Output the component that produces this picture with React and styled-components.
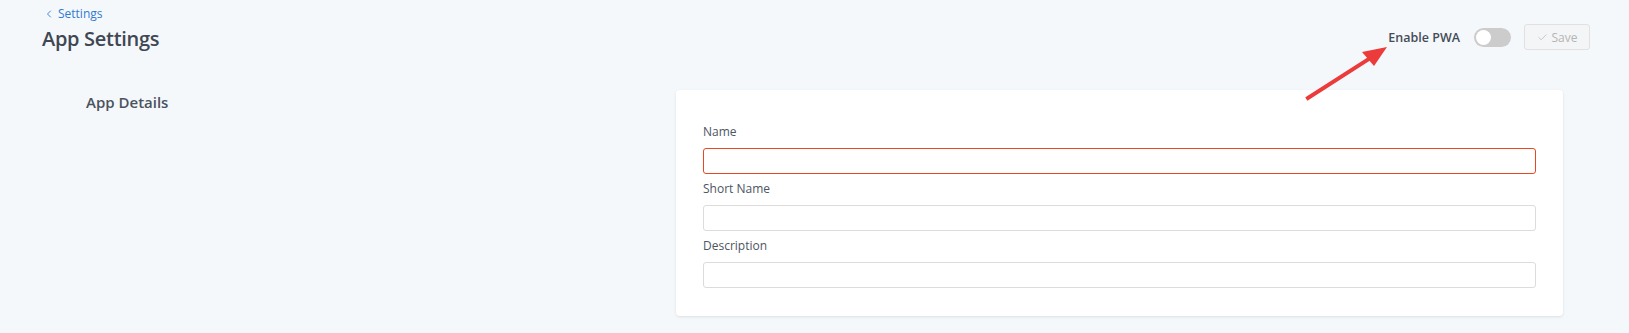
import React from "react";
import styled, { createGlobalStyle } from "styled-components";
import { ChevronLeft, Check } from "lucide-react";

const GlobalStyle = createGlobalStyle`
  html, body { margin: 0; padding: 0; }
  body {
    background: #f5f8fb;
    font-family: "Open Sans", "Noto Sans", sans-serif;
    color: #3f4a56;
  }
  * { box-sizing: border-box; }
`;

const Page = styled.div`
  position: relative;
  width: 1629px;
  min-height: 333px;
  background: #f5f8fb;
`;

const Header = styled.header`
  display: flex;
  justify-content: space-between;
  align-items: flex-start;
  padding: 6px 39px 0 42px;
`;

const TitleBlock = styled.div`
  display: flex;
  flex-direction: column;
`;

const BackLink = styled.a`
  display: inline-flex;
  align-items: center;
  gap: 3px;
  font-size: 12px;
  line-height: 16px;
  color: #2f7ad3;
  text-decoration: none;
  margin-left: 1px;
  cursor: pointer;
`;

const Title = styled.h1`
  margin: 3px 0 0;
  font-size: 20px;
  line-height: 28px;
  font-weight: 600;
  color: #3f4753;
  letter-spacing: -0.3px;
`;

const Actions = styled.div`
  display: flex;
  align-items: center;
  margin-top: 18px;
`;

const ToggleLabel = styled.span`
  font-size: 12.5px;
  font-weight: 600;
  color: #444c57;
  margin-right: 14px;
`;

const Toggle = styled.button`
  position: relative;
  width: 37px;
  height: 19px;
  border: none;
  border-radius: 10px;
  background: ${(p) => (p.$on ? "#2f7ad3" : "#cccccc")};
  padding: 0;
  margin-right: 13px;
  cursor: pointer;
  &::after {
    content: "";
    position: absolute;
    top: 2px;
    left: ${(p) => (p.$on ? "20px" : "2px")};
    width: 15px;
    height: 15px;
    border-radius: 50%;
    background: #fff;
  }
`;

const SaveButton = styled.button`
  display: inline-flex;
  align-items: center;
  justify-content: center;
  gap: 4px;
  width: 66px;
  height: 26px;
  border: 1px solid #e1e1e1;
  border-radius: 3px;
  background: #f4f5f6;
  color: #b5b5b5;
  font-family: inherit;
  font-size: 12px;
  padding: 0;
`;

const Content = styled.main`
  display: flex;
  align-items: flex-start;
  margin-top: 37px;
  padding: 0 66px 0 86px;
`;

const SectionTitle = styled.h2`
  flex: 1;
  margin: 0;
  padding-top: 1px;
  font-size: 15px;
  line-height: 22px;
  font-weight: 600;
  color: #4a5360;
`;

const Card = styled.section`
  width: 887px;
  background: #fff;
  border-radius: 4px;
  box-shadow: 0 1px 3px rgba(0, 0, 0, 0.1);
  padding: 33px 27px 28px;
  display: flex;
  flex-direction: column;
  gap: 6px;
`;

const Field = styled.div`
  display: flex;
  flex-direction: column;
`;

const Label = styled.label`
  font-size: 12px;
  line-height: 18px;
  color: #4d5561;
  margin-bottom: 7px;
`;

const Input = styled.input`
  height: 26px;
  width: 100%;
  border: 1px solid ${(p) => (p.$error ? "#e8471f" : "#dcdcdc")};
  border-radius: 3px;
  background: #fff;
  font-family: inherit;
  font-size: 12px;
  padding: 0 8px;
  outline: none;
`;

const Arrow = styled.svg`
  position: absolute;
  left: 1300px;
  top: 40px;
  pointer-events: none;
`;

export default function App() {
  return (
    <Page>
      <GlobalStyle />
      <Header>
        <TitleBlock>
          <BackLink>
            <ChevronLeft size={12} strokeWidth={1.8} />
            Settings
          </BackLink>
          <Title>App Settings</Title>
        </TitleBlock>
        <Actions>
          <ToggleLabel>Enable PWA</ToggleLabel>
          <Toggle $on={false} aria-label="Enable PWA" />
          <SaveButton disabled>
            <Check size={11} strokeWidth={1.5} />
            Save
          </SaveButton>
        </Actions>
      </Header>
      <Content>
        <SectionTitle>App Details</SectionTitle>
        <Card>
          <Field>
            <Label>Name</Label>
            <Input $error />
          </Field>
          <Field>
            <Label>Short Name</Label>
            <Input />
          </Field>
          <Field>
            <Label>Description</Label>
            <Input />
          </Field>
        </Card>
      </Content>
      <Arrow width="100" height="65" viewBox="1300 40 100 65">
        <line x1="1308" y1="98" x2="1372" y2="57" stroke="#ec3b3b" strokeWidth="4" strokeLinecap="square" />
        <polygon points="1387,47 1362,52 1374,66" fill="#ec3b3b" />
      </Arrow>
    </Page>
  );
}
